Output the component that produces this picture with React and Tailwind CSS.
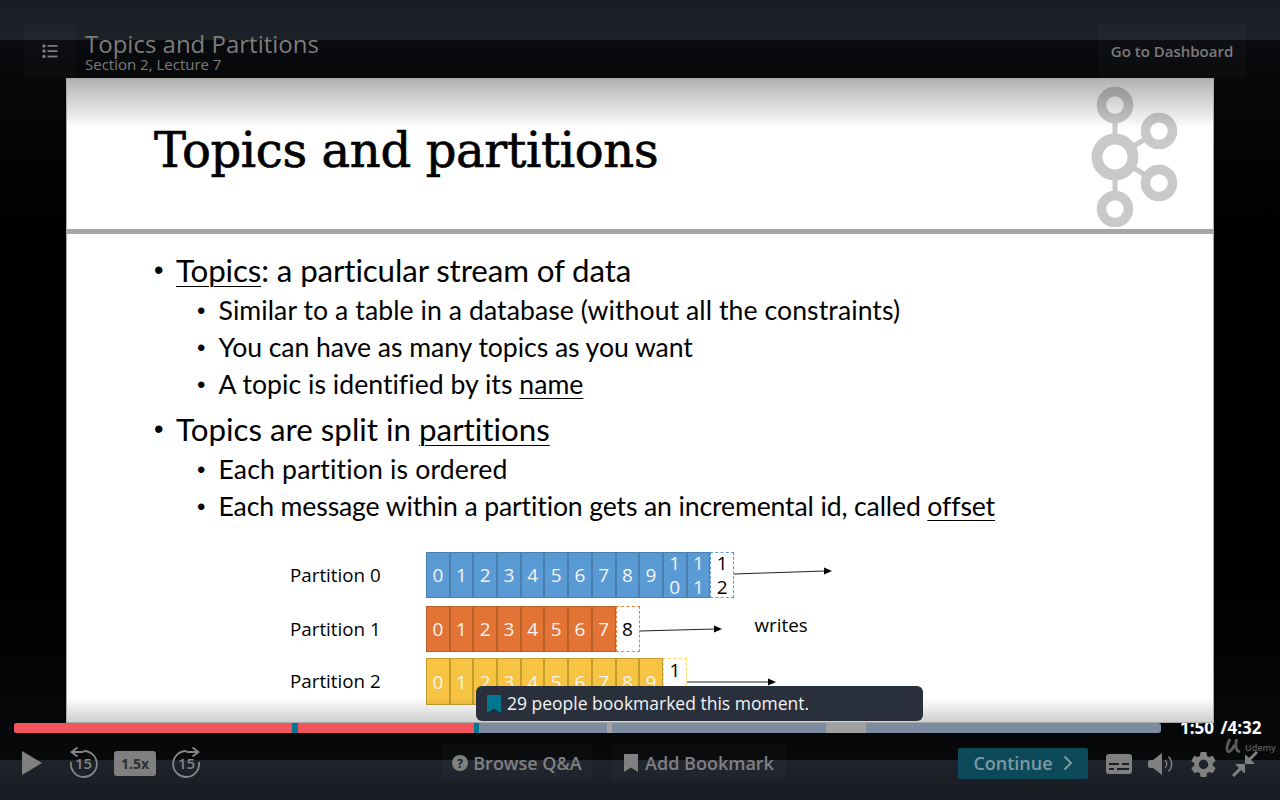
import { MdSettings } from 'react-icons/md';

const SANS = "font-['Open_Sans',sans-serif]";

// Partition rows of the slide diagram
const PARTITIONS = [
  {
    name: 'Partition 0',
    cells: ['0', '1', '2', '3', '4', '5', '6', '7', '8', '9', '1 0', '1 1'],
    next: '1 2',
    cellClass: 'bg-[#5b9bd5] border-[#4a7fae]',
    dashClass: 'border-[#5b9bd5]',
    rowClass: 'h-[46px]',
    arrow: { w: 98, y1: 22, y2: 19 },
  },
  {
    name: 'Partition 1',
    cells: ['0', '1', '2', '3', '4', '5', '6', '7'],
    next: '8',
    cellClass: 'bg-[#e37436] border-[#b8602a]',
    dashClass: 'border-[#ed7d31]',
    rowClass: 'h-[46px] mt-2',
    arrow: { w: 82, y1: 25, y2: 23 },
    extra: 'writes',
  },
  {
    name: 'Partition 2',
    cells: ['0', '1', '2', '3', '4', '5', '6', '7', '8', '9'],
    next: '1 0',
    cellClass: 'bg-[#f6c342] border-[#c49c2e]',
    dashClass: 'border-[#ffd966]',
    rowClass: 'h-[47px] mt-1.5',
    arrow: { w: 89, y1: 23, y2: 23 },
  },
];

const Arrow = ({ w, y1, y2 }) => (
  <svg width={w} height="46" viewBox={`0 0 ${w} 46`} className="shrink-0">
    <line x1="0" y1={y1} x2={w - 7} y2={y2} stroke="#222" strokeWidth="1" />
    <polygon points={`${w},${y2} ${w - 8},${y2 - 3.5} ${w - 8},${y2 + 3.5}`} fill="#000" />
  </svg>
);

const Cell = ({ value, className }) => (
  <div className={`w-[23.7px] h-full shrink-0 border flex items-center justify-center text-center text-[19px] leading-[24px] text-[#f4f4f4] ${className}`}>
    <span className="block w-[12px] break-words">{value}</span>
  </div>
);

const PartitionRow = ({ row }) => (
  <div className={`flex items-center ${row.rowClass}`}>
    <div className={`w-[136px] shrink-0 text-[18.8px] text-black ${SANS}`}>{row.name}</div>
    <div className={`flex h-full ${SANS}`}>
      {row.cells.map((c, i) => (
        <Cell key={i} value={c} className={row.cellClass} />
      ))}
      <div className={`w-[24px] h-full shrink-0 border-[1.5px] border-dashed flex items-center justify-center text-center text-[19px] leading-[24px] text-black bg-white ${row.dashClass}`}>
        <span className="block w-[12px] break-words">{row.next}</span>
      </div>
    </div>
    <Arrow {...row.arrow} />
    {row.extra && <div className={`ml-[33px] -mt-2 text-[18.8px] text-black ${SANS}`}>{row.extra}</div>}
  </div>
);

const KafkaLogo = () => (
  <svg width="90" height="142" viewBox="0 0 90 142" className="shrink-0">
    <g fill="none" stroke="#c9c9c9">
      <path d="M26 20V122M26 72L70 46M26 72L70 98" strokeWidth="5" />
      <circle cx="26" cy="20" r="13.5" strokeWidth="9.5" fill="#fff" />
      <circle cx="26" cy="124" r="13.5" strokeWidth="9.5" fill="#fff" />
      <circle cx="70" cy="46" r="13.5" strokeWidth="9.5" fill="#fff" />
      <circle cx="70" cy="98" r="13.5" strokeWidth="9.5" fill="#fff" />
      <circle cx="26" cy="72" r="18" strokeWidth="11" fill="#fff" />
    </g>
  </svg>
);

const Bullet = ({ level, className = '', children }) => {
  const big = level === 1;
  return (
    <li className={`flex items-center text-black ${big ? 'h-[40px] text-[31.3px] pl-[87px]' : 'h-[37px] text-[26.6px] pl-[130px]'} ${className}`}>
      <span className={`shrink-0 font-['Liberation_Sans',sans-serif] tracking-normal ${big ? 'w-[22px] text-[27px]' : 'w-[21.5px] text-[24px]'}`}>•</span>
      <span className="whitespace-nowrap [font-variant-ligatures:none]">{children}</span>
    </li>
  );
};

const Under = ({ children }) => (
  <span className="underline underline-offset-4 decoration-1">{children}</span>
);

const Slide = () => (
  <div className="relative w-[1148px] h-[645px] overflow-hidden bg-white border border-[#a9a9a9]">
    <div className="flex h-[150px] items-start justify-between pl-[87px] pr-[34px]">
      <h1 className="mt-[36px] text-[48px] leading-[70px] text-black font-['DejaVu_Serif',serif] tracking-[-0.35px] [-webkit-text-stroke:0.7px_black]">Topics and partitions</h1>
      <div className="mt-[6px]"><KafkaLogo /></div>
    </div>
    <div className="h-[5px] bg-[#a6a6a6]" />
    <ul className="pt-[16px] font-['Lato',sans-serif]">
      <Bullet level={1} className="mb-[2px] tracking-[-0.12px]"><Under>Topics</Under>: a particular stream of data</Bullet>
      <Bullet level={2} className="tracking-[0.08px]">Similar to a table in a database (without all the constraints)</Bullet>
      <Bullet level={2} className="tracking-[-0.05px]">You can have as many topics as you want</Bullet>
      <Bullet level={2} className="tracking-[0.03px]">A topic is identified by its <Under>name</Under></Bullet>
      <Bullet level={1} className="mt-[6px] mb-[2px]">Topics are split in <Under>partitions</Under></Bullet>
      <Bullet level={2} className="tracking-[0.16px]">Each partition is ordered</Bullet>
      <Bullet level={2} className="tracking-[-0.13px]">Each message within a partition gets an incremental id, called <Under>offset</Under></Bullet>
    </ul>
    <div className="mt-[27px] pl-[223px]">
      {PARTITIONS.map((row) => (
        <PartitionRow key={row.name} row={row} />
      ))}
    </div>
    {/* sombras del video encima de la lamina */}
    <div className="absolute top-0 inset-x-0 h-[50px] bg-gradient-to-b from-[#0000004d] to-transparent pointer-events-none" />
    <div className="absolute bottom-0 inset-x-0 h-[24px] bg-gradient-to-t from-[#00000030] to-transparent pointer-events-none" />
  </div>
);

const ProgressBar = () => (
  <div className="flex items-center h-[10px] pl-[14px]">
    <div className="flex w-[1147px] h-full rounded-[3px] overflow-hidden bg-[#7d8ca1]">
      <div className="w-[278px] bg-[#f3535a]" />
      <div className="w-[6px] bg-[#007791]" />
      <div className="w-[176px] bg-[#f3535a]" />
      <div className="w-[5px] bg-[#007791]" />
      <div className="w-[128px]" />
      <div className="w-[5px] bg-[#a3a3a3]" />
      <div className="w-[214px]" />
      <div className="w-[40px] bg-[#a0a0a0]" />
    </div>
    <div className={`ml-[19px] text-[17px] font-bold text-white whitespace-nowrap ${SANS}`}>1:50 <span className="ml-0.5">/4:32</span></div>
  </div>
);

const SkipIcon = ({ forward }) => (
  <svg width="30" height="30" viewBox="0 0 30 30" fill="none" stroke="#868686" strokeWidth="1.8" className="overflow-visible">
    <g transform={forward ? 'matrix(-1 0 0 1 29 0)' : undefined}>
      <path d="M14.5 2A13 13 0 1 1 2 13" />
      <path d="M14.5 3H3M8.5 -1.5L2.5 3L8.5 7.5" />
    </g>
    <text x="14.5" y="20" textAnchor="middle" fontSize="15" fontWeight="600" fontFamily="Open Sans, sans-serif" fill="#868686" stroke="none">15</text>
  </svg>
);

const Controls = () => (
  <div className={`absolute left-0 right-0 top-[745px] h-[36px] flex items-center ${SANS}`}>
    <svg width="20" height="24" viewBox="0 0 20 24" className="ml-[22px]"><polygon points="0,0 20,12 0,24" fill="#808080" /></svg>
    <div className="ml-[27px] mt-[2px]"><SkipIcon /></div>
    <div className="ml-[15px] w-[42px] h-[25px] rounded-[3px] bg-[#7f7f7f] flex items-center justify-center text-[14px] font-bold text-[#2e3034]">1.5x</div>
    <div className="ml-[16px] mt-[2px]"><SkipIcon forward /></div>

    <div className="ml-[240px] w-[150px] h-[36px] flex items-center justify-center gap-[5px] bg-[#ffffff05] text-[18px] font-semibold text-[#7f8083]">
      <svg width="16" height="16" viewBox="0 0 16 16"><circle cx="8" cy="8" r="8" fill="#808080" /><text x="8" y="12.5" textAnchor="middle" fontSize="12" fontWeight="700" fontFamily="Open Sans, sans-serif" fill="#1c1f26">?</text></svg>
      Browse Q&amp;A
    </div>
    <div className="ml-[20px] w-[174px] h-[36px] flex items-center justify-center gap-[7px] bg-[#ffffff05] text-[18px] font-semibold text-[#7f8083]">
      <svg width="14" height="18" viewBox="0 0 14 18"><polygon points="0,0 14,0 14,18 7,13.5 0,18" fill="#808080" /></svg>
      Add Bookmark
    </div>

    <div className="ml-[172px] w-[130px] h-[31px] rounded-[2px] bg-[#0c4a59] flex items-center justify-center gap-[10px] text-[18px] font-semibold text-[#7c9aa2]">
      Continue
      <svg width="10" height="16" viewBox="0 0 10 16" fill="none" stroke="#7c9aa2" strokeWidth="2"><path d="M1.5 1.5L8 8L1.5 14.5" /></svg>
    </div>

    <svg width="26" height="20" viewBox="0 0 26 20" className="ml-[18px] mt-[2px]">
      <rect width="26" height="20" rx="3" fill="#808080" />
      <path d="M3 10H13M16 10H23M3 15H8M11 15H23" stroke="#1c1f26" strokeWidth="2" />
    </svg>
    <svg width="27" height="24" viewBox="0 0 27 24" className="ml-[16px] mt-[2px]" fill="none">
      <path d="M0 10a2 2 0 0 1 2-2H5L14 1V23L5 16H2a2 2 0 0 1-2-2Z" fill="#808080" />
      <path d="M17 8a5.5 5.5 0 0 1 0 8M20.5 4.5a10.5 10.5 0 0 1 0 15" stroke="#808080" strokeWidth="1.4" />
    </svg>
    <MdSettings size={31} color="#808080" className="ml-[13px] mt-[2px]" />
    <svg width="26" height="26" viewBox="0 0 26 26" className="ml-[13px] mt-[2px]" fill="none" stroke="#808080" strokeWidth="3">
      <path d="M25 1L17 9M1 25L9 17" />
      <polygon points="13.5,4 13.5,12.5 22,12.5" fill="#808080" strokeWidth="1" />
      <polygon points="12.5,22 12.5,13.5 4,13.5" fill="#808080" strokeWidth="1" />
    </svg>
  </div>
);

export default function App() {
  return (
    <div className="relative w-[1280px] h-[800px] overflow-hidden flex flex-col bg-black">
      {/* barra superior */}
      <div className="h-[40px] shrink-0 bg-gradient-to-b from-[#1a1d23] to-[#1d2129]" />

      {/* escenario del video */}
      <div className="flex-1 flex flex-col bg-gradient-to-b from-[#0a0b0e] via-black to-[#08090b]">
        <div className="pt-[38px] pl-[66px]"><Slide /></div>
        <ProgressBar />
      </div>

      {/* barra inferior */}
      <div className="h-[40px] shrink-0 bg-gradient-to-b from-[#1f232c] to-[#181b21]" />

      {/* controles encima del video */}
      <div className="absolute top-[24px] left-[24px] w-[51px] h-[54px] bg-[#ffffff05] flex items-center justify-center">
        <svg width="16" height="14" viewBox="0 0 16 14" fill="#7c7c7c">
          <circle cx="2" cy="2" r="1.7" /><circle cx="2" cy="7" r="1.7" /><circle cx="2" cy="12.5" r="1.7" />
          <rect x="5.5" y="1" width="10" height="1.8" /><rect x="5.5" y="6.2" width="10" height="1.8" /><rect x="5.5" y="11.6" width="10" height="1.8" />
        </svg>
      </div>
      <div className={`absolute top-[30px] left-[85px] text-[#7c7c7c] ${SANS}`}>
        <div className="text-[24px] leading-[28px]">Topics and Partitions</div>
        <div className="text-[15px] leading-[13px]">Section 2, Lecture 7</div>
      </div>
      <div className={`absolute top-[24px] left-[1098px] w-[148px] h-[54px] bg-[#ffffff05] flex items-center justify-center text-[15px] font-semibold text-[#7c7c7c] ${SANS}`}>
        Go to Dashboard
      </div>

      <Controls />

      {/* tooltip de marcadores */}
      <div className={`absolute top-[686px] left-[476px] w-[447px] h-[35px] rounded-[6px] bg-[#2a303b] flex items-center pl-[11px] text-[17.5px] text-[#f2f3f5] ${SANS}`}>
        <svg width="14" height="18" viewBox="0 0 14 18" className="mr-[6px]"><polygon points="0,0 14,0 14,18 7,13.5 0,18" fill="#007791" /></svg>
        29 people bookmarked this moment.
      </div>

      {/* marca Udemy */}
      <div className={`absolute top-[737px] left-[1225px] flex items-center gap-[2px] text-[#5c5c5c] ${SANS}`}>
        <svg width="18" height="16" viewBox="0 0 18 16" fill="none" stroke="#5c5c5c" strokeWidth="2.8"><path d="M5 1C3 5 1 10 2.5 13C4 15.5 7.5 11 9.5 7M11.5 1C10.5 6 9.5 12.5 15 14" /></svg>
        <span className="text-[9px] font-semibold mt-[4px]">Udemy</span>
      </div>
    </div>
  );
}
